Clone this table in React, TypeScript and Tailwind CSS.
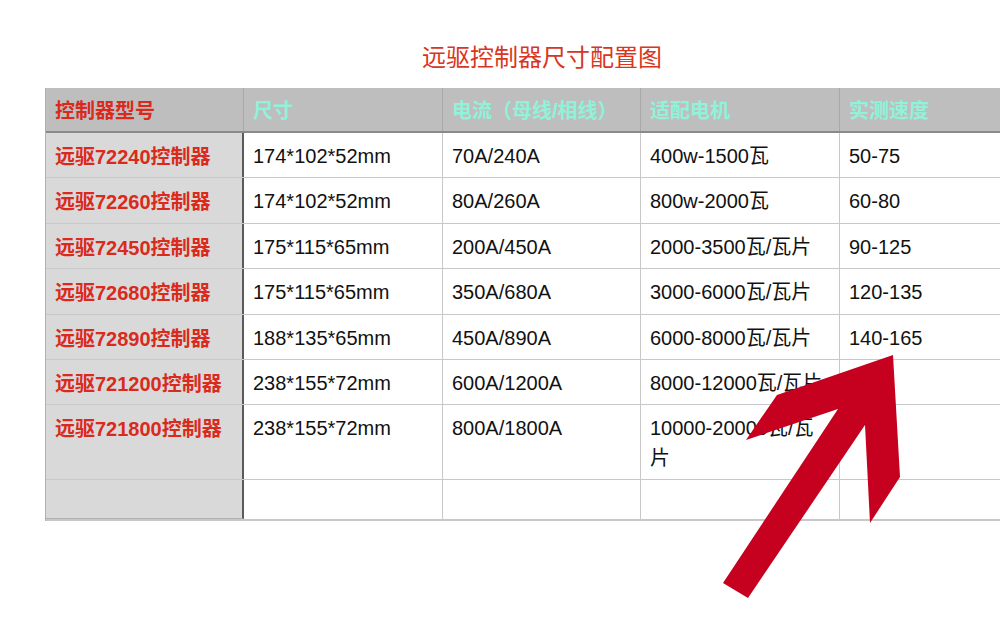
import React from "react";

const rows: { name: string; size: string; cur: string; motor: string; speed: string; tall?: boolean }[] = [
  { name: "远驱72240控制器", size: "174*102*52mm", cur: "70A/240A", motor: "400w-1500瓦", speed: "50-75" },
  { name: "远驱72260控制器", size: "174*102*52mm", cur: "80A/260A", motor: "800w-2000瓦", speed: "60-80" },
  { name: "远驱72450控制器", size: "175*115*65mm", cur: "200A/450A", motor: "2000-3500瓦/瓦片", speed: "90-125" },
  { name: "远驱72680控制器", size: "175*115*65mm", cur: "350A/680A", motor: "3000-6000瓦/瓦片", speed: "120-135" },
  { name: "远驱72890控制器", size: "188*135*65mm", cur: "450A/890A", motor: "6000-8000瓦/瓦片", speed: "140-165" },
  { name: "远驱721200控制器", size: "238*155*72mm", cur: "600A/1200A", motor: "8000-12000瓦/瓦片", speed: "" },
  { name: "远驱721800控制器", size: "238*155*72mm", cur: "800A/1800A", motor: "10000-20000瓦/瓦片", speed: "", tall: true },
];

const font = { fontFamily: '"Liberation Sans", "Noto Sans CJK SC", sans-serif' };

export default function App() {
  return (
    <div className="relative w-[1000px] h-[629px] overflow-hidden bg-white" style={font}>
      <div className="h-[88px] flex justify-center pt-[40px]">
        <div className="ml-[84px] text-[24px] leading-[32px] text-[#d8361e]" style={{ fontFamily: '"Noto Sans CJK SC", sans-serif' }}>
          远驱控制器尺寸配置图
        </div>
      </div>
      <div className="ml-[45px] w-[1000px] border-l border-[#b0b0b0]">
        {/* header */}
        <div className="grid grid-cols-[198px_199px_198px_199px_206px] h-[45px] bg-[#bebebe] border-b-2 border-[#8a8a8a] text-[20px] leading-[30px] font-bold">
          <div className="pl-[9px] pt-[8px] text-[#d92a1c] border-r border-[#a8a8a8]">控制器型号</div>
          <div className="pl-[9px] pt-[8px] text-[#8ff2d9] font-semibold border-r border-[#a8a8a8]">尺寸</div>
          <div className="pl-[9px] pt-[8px] text-[#8ff2d9] font-semibold border-r border-[#a8a8a8]">电流（母线/相线）</div>
          <div className="pl-[9px] pt-[8px] text-[#8ff2d9] font-semibold border-r border-[#a8a8a8]">适配电机</div>
          <div className="pl-[9px] pt-[8px] text-[#8ff2d9] font-semibold">实测速度</div>
        </div>
        {rows.map((r, i) => (
          <div
            key={i}
            className={`grid grid-cols-[198px_199px_198px_199px_206px] border-b border-[#c8c8c8] text-[20px] leading-[30px] text-[#111] ${r.tall ? "h-[75px]" : "h-[45.4px]"}`}
          >
            <div className="bg-[#d9d9d9] pl-[9px] pt-[9px] font-bold text-[#d92a1c] border-r-2 border-[#5a5a5a] whitespace-nowrap">{r.name}</div>
            <div className="pl-[9px] pt-[8px] border-r border-[#c8c8c8]">{r.size}</div>
            <div className="pl-[9px] pt-[8px] border-r border-[#c8c8c8]">{r.cur}</div>
            <div className="pl-[9px] pt-[8px] pr-[9px] border-r border-[#c8c8c8] break-all">{r.motor}</div>
            <div className="pl-[9px] pt-[8px]">{r.speed}</div>
          </div>
        ))}
        <div className="grid grid-cols-[198px_199px_198px_199px_206px] h-[41px] border-b-2 border-[#c8c8c8]">
          <div className="bg-[#d9d9d9] border-r-2 border-[#5a5a5a] border-b border-b-[#b0b0b0]"></div>
          <div className="border-r border-[#c8c8c8]"></div>
          <div className="border-r border-[#c8c8c8]"></div>
          <div className="border-r border-[#c8c8c8]"></div>
          <div></div>
        </div>
      </div>
      <svg className="absolute left-0 top-0 pointer-events-none" width="1000" height="629" viewBox="0 0 1000 629">
        <polygon
          fill="#c6001f"
          points="893,355 900,477 870,523 865,425 748,598 723,583 838,409 746,440 777,395"
        />
      </svg>
    </div>
  );
}
